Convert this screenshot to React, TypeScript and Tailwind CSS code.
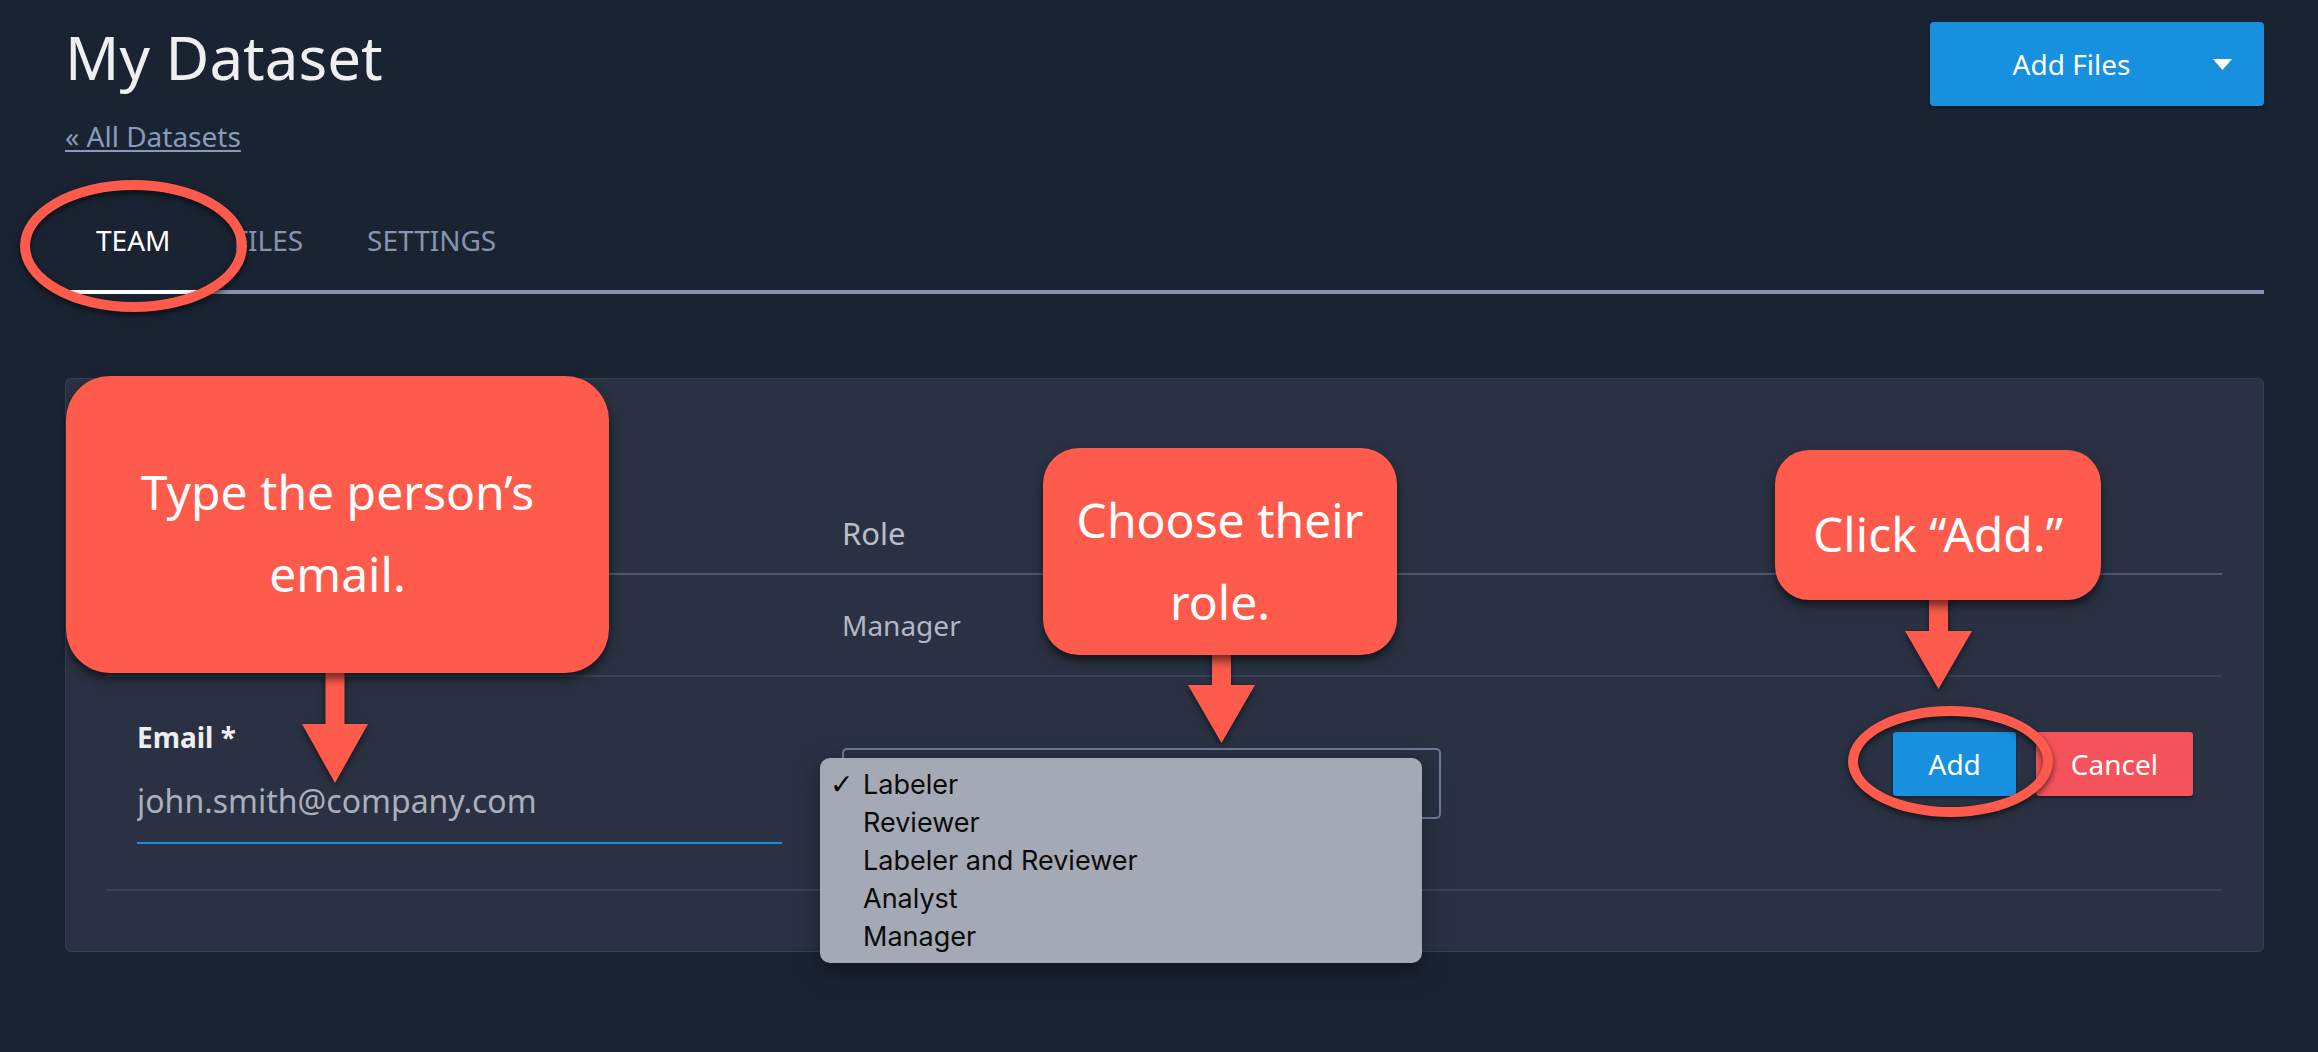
import React from 'react';

// Role options shown in the open select
const roles = ['Labeler', 'Reviewer', 'Labeler and Reviewer', 'Analyst', 'Manager'];

function Arrow({ className, w, h, stem }: { className: string; w: number; h: number; stem: number }) {
  const mid = w / 2;
  return (
    <svg
      className={`absolute drop-shadow-[0_3px_3px_rgba(0,0,0,0.55)] ${className}`}
      width={w}
      height={h}
      viewBox={`0 0 ${w} ${h}`}
    >
      <rect x={mid - 9.5} y={0} width={19} height={stem + 1} fill="#ff5b4c" />
      <polygon points={`0,${stem} ${w},${stem} ${mid},${h}`} fill="#ff5b4c" />
    </svg>
  );
}

export default function App() {
  return (
    <div className="relative min-h-screen overflow-hidden bg-[#1a2332] pl-[65px] pr-[54px] pt-[21px] font-['Noto_Sans',sans-serif]">
      {/* header */}
      <div className="flex items-start justify-between">
        <div>
          <h1 className="text-[60px] font-normal leading-[72px] text-[#eeeff1]">My Dataset</h1>
          <a className="mt-[25px] block w-fit text-[28px] leading-[36px] text-[#8b9abb] underline decoration-2 underline-offset-[3px]">
            « All Datasets
          </a>
        </div>
        <button className="mt-[1px] flex h-[84px] w-[334px] items-center rounded-[4px] bg-[#1890e0] pr-[32px] text-white shadow-[0_2px_3px_rgba(0,0,0,0.45)]">
          <span className="flex-1 text-center text-[28px]">Add Files</span>
          <svg width="19" height="11" viewBox="0 0 19 11">
            <polygon points="0,0 19,0 9.5,11" fill="#ffffff" />
          </svg>
        </button>
      </div>

      {/* tabs */}
      <div className="mt-[36px] flex border-b-4 border-[#8793b0] text-[28px]">
        <div className="-mb-[4px] flex h-[104px] items-center border-b-4 border-white px-[31px] text-white">TEAM</div>
        <div className="flex h-[100px] items-center px-[32px] text-[#8794b0]">FILES</div>
        <div className="flex h-[100px] items-center px-[32px] text-[#8794b0]">SETTINGS</div>
      </div>

      {/* team card */}
      <div className="mt-[84px] rounded-[6px] border border-[#363f51] bg-[#293142] pb-[60px] pl-[40px] pr-[41px] pt-[114px]">
        <div className="flex h-[82px] items-center border-b-2 border-[#4f586a] text-[31px] text-[#b9bec8]">
          <div className="w-[736px]" />
          <div>Role</div>
        </div>
        <div className="flex h-[102px] items-center border-b-2 border-[#394256] text-[28px] text-[#b2b8c3]">
          <div className="w-[736px]" />
          <div>Manager</div>
        </div>

        {/* add member form */}
        <div className="flex h-[214px] items-start border-b-2 border-[#394256]">
          <div className="w-[736px] pl-[31px] pr-[60px]">
            <div className="mt-[42px] text-[28px] font-bold leading-[36px] text-[#eceef1]">Email *</div>
            <input
              readOnly
              placeholder="john.smith@company.com"
              className="mt-[22px] box-border h-[67px] w-full border-b-2 border-[#1a8ce0] bg-transparent pb-[18px] text-[32px] text-[#aab0bb] outline-none placeholder:text-[#aab0bb]"
            />
          </div>
          <div className="flex flex-1 items-start justify-between pr-[29px]">
            <div className="relative mt-[71px] h-[71px] w-[599px] rounded-[5px] border-2 border-[#6d7a96]">
              <div className="absolute left-[-24px] top-[8px] z-10 h-[205px] w-[602px] rounded-[10px] bg-[#a3a9b5] pt-[8px] font-['Inter',sans-serif] text-[27px] text-[#0b0b0b] shadow-[0_8px_24px_rgba(0,0,0,0.35)]">
                {roles.map((role, i) => (
                  <div key={role} className="flex h-[38px] items-center pl-[10px]">
                    <span className="w-[33px] font-['DejaVu_Sans',sans-serif] text-[28px]">{i === 0 ? '✓' : ''}</span>
                    <span>{role}</span>
                  </div>
                ))}
              </div>
            </div>
            <div className="mt-[55px] flex gap-[20px] text-[28px] text-white">
              <button className="h-[64px] rounded-[3px] bg-[#1890e0] px-[35px] shadow-[0_2px_3px_rgba(0,0,0,0.4)]">Add</button>
              <button className="h-[64px] rounded-[3px] bg-[#f5535b] px-[35px] shadow-[0_2px_3px_rgba(0,0,0,0.4)]">Cancel</button>
            </div>
          </div>
        </div>
      </div>

      {/* annotation overlays */}
      <div className="absolute left-[20px] top-[180px] h-[132px] w-[227px] rounded-[50%] border-[10px] border-[#ff5b4c] drop-shadow-[0_3px_3px_rgba(0,0,0,0.6)]" />
      <div className="absolute left-[1848px] top-[706px] h-[111px] w-[205px] rounded-[50%] border-[10px] border-[#ff5b4c] drop-shadow-[0_3px_3px_rgba(0,0,0,0.6)]" />

      <Arrow className="left-[302px] top-[670px]" w={66} h={113} stem={54} />
      <Arrow className="left-[1188px] top-[652px]" w={67} h={91} stem={33} />
      <Arrow className="left-[1905px] top-[597px]" w={67} h={92} stem={34} />

      <div className="absolute left-[66px] top-[376px] flex h-[297px] w-[543px] items-center justify-center rounded-[44px] bg-[#ff5b4c] pt-[16px] text-center text-[48px] leading-[82px] text-white shadow-[0_6px_10px_rgba(0,0,0,0.55)]">
        Type the person’s
        <br />
        email.
      </div>
      <div className="absolute left-[1043px] top-[448px] flex h-[207px] w-[354px] items-center justify-center rounded-[36px] bg-[#ff5b4c] pt-[19px] text-center text-[48px] leading-[82px] text-white shadow-[0_6px_10px_rgba(0,0,0,0.55)]">
        Choose their
        <br />
        role.
      </div>
      <div className="absolute left-[1775px] top-[450px] flex h-[150px] w-[326px] items-center justify-center rounded-[34px] bg-[#ff5b4c] pt-[18px] text-center text-[48px] leading-[82px] text-white shadow-[0_6px_10px_rgba(0,0,0,0.55)]">
        Click “Add.”
      </div>
    </div>
  );
}
